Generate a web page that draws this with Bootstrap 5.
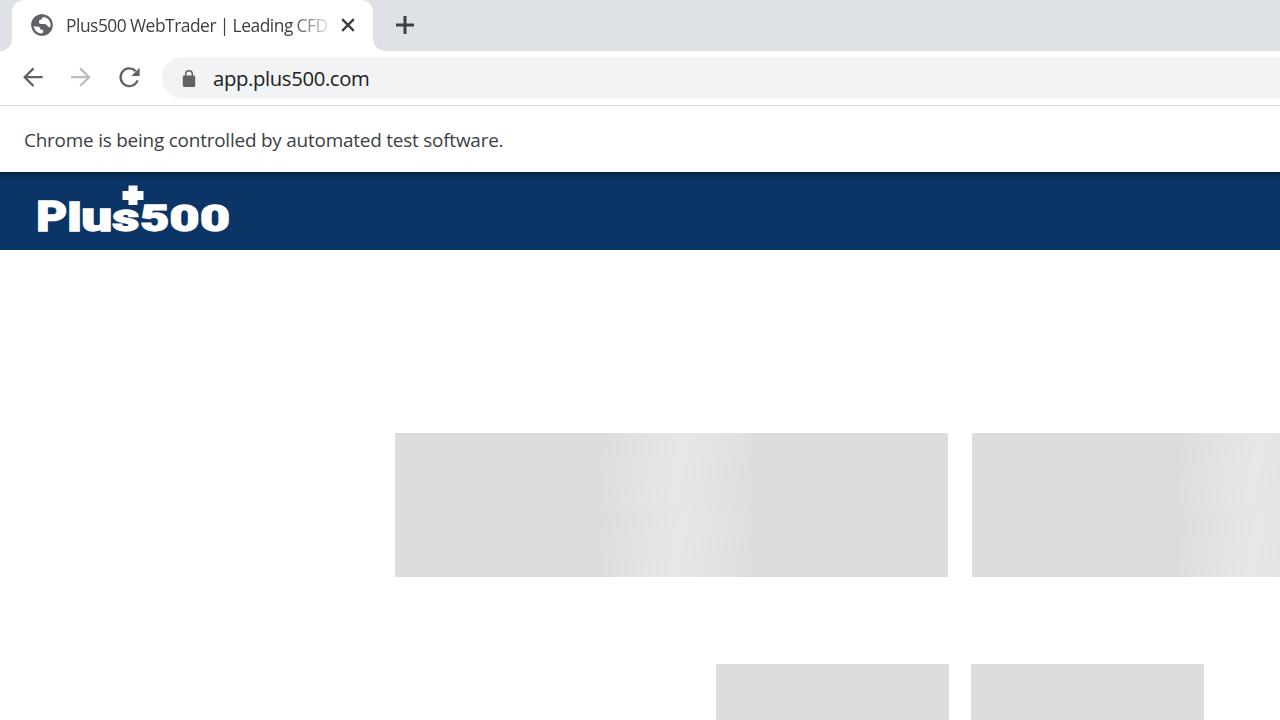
<!DOCTYPE html>
<html lang="en">
<head>
<meta charset="utf-8">
<meta name="viewport" content="width=device-width, initial-scale=1">
<title>Plus500 WebTrader</title>
<link href="https://cdn.jsdelivr.net/npm/bootstrap@5.3.0/dist/css/bootstrap.min.css" rel="stylesheet">
<style>
body{font-family:"Open Sans","Noto Sans",sans-serif;height:720px;overflow:hidden}
svg{display:block;flex:none}
.tab-strip{height:51px;background:#fff}
.strip-left{width:12px;background:#dee1e6;border-bottom-right-radius:12px}
.tab-wrap{width:361px;background:#dee1e6}
.browser-tab{height:51px;background:#fff;border-radius:12px 12px 0 0;padding:0 0 2px 18px}
.strip-rest{background:#dee1e6;border-bottom-left-radius:12px;padding:0 0 2px 22px}
.tab-title{width:263px;margin-left:12px;font-size:17.4px;line-height:24px;letter-spacing:-.48px;word-spacing:-.3px;color:#3c4043;-webkit-mask-image:linear-gradient(90deg,#000 224px,transparent 270px)}
.tab-close{margin-left:12px}
.toolbar{height:55px;border-bottom:1px solid #dadce0;padding:0 0 1px 18px}
.reload{margin-left:21px}
.address{height:42px;margin-left:17px;border-radius:21px 0 0 21px;background:#f1f3f4;padding-left:18px}
.url{font-size:20.3px;line-height:28px;margin-left:15px;padding-top:1px;letter-spacing:-.36px;color:#202124}
.infobar{height:66px;padding:2px 0 0 24px;font-size:18.9px;letter-spacing:-.2px;color:#3c4043}
.app-header{height:78px;padding-left:30px;background:linear-gradient(#062748,#0b3567 9px,#0b3567)}
.app-body{padding:183px 0 0 395px}
.bone{flex:none;background-color:#ddd}
.bone-wide{width:553px;height:144px;background-image:linear-gradient(100deg,rgba(255,255,255,0),rgba(255,255,255,.3) 50%,rgba(255,255,255,0));background-size:150px 75px;background-repeat:repeat-y;background-position:208px 0}
.bone-row{gap:24px}
.bone-row-small{gap:22px;margin-top:87px;padding-left:321px}
.bone-small{width:233px;height:56px}
</style>
</head>
<body class="bg-white d-flex flex-column">
<div class="tab-strip d-flex flex-shrink-0">
  <div class="strip-left"></div>
  <div class="tab-wrap flex-shrink-0">
    <div class="browser-tab d-flex align-items-center">
      <svg width="24" height="24" viewBox="0 0 24 24"><circle cx="12" cy="12" r="9.7" fill="#fff" stroke="#5f6368" stroke-width="2.2"/><path fill="#5f6368" d="M12 1.5C6 1.5 1.5 6 1.5 12l.4 1.6h5.3c1.9 0 3.3 1.2 3.3 3.1h2.6v2.5l-2.2 2.9c5.5.6 10.6-3.5 11.4-8.3-1.8 1-3.8.6-4.8-.9-.8-1.2-2.1-1.8-4.1-1.8h-2.3c-1.4 0-2.2-.8-2.2-2 0-1.7 1-2.5 2.6-2.5.2-1.5 1-2.4 2.8-2.5V2z"/></svg>
      <span class="tab-title text-nowrap overflow-hidden">Plus500 WebTrader | Leading CFD</span>
      <svg class="tab-close" width="14" height="14" viewBox="0 0 14 14"><path d="M1.2 1.2l11.6 11.6m0-11.6L1.2 12.8" stroke="#3c4043" stroke-width="2.4"/></svg>
    </div>
  </div>
  <div class="strip-rest flex-grow-1 d-flex align-items-center">
    <svg width="20" height="20" viewBox="0 0 20 20"><path d="M10 1v18M1 10h18" stroke="#3c4043" stroke-width="3"/></svg>
  </div>
</div>
<div class="toolbar d-flex align-items-center flex-shrink-0">
  <svg width="30" height="30" viewBox="0 0 30 30"><path d="M24.7 14.2H7M15.5 5.4L6.7 14.2l8.8 8.8" fill="none" stroke="#5f6368" stroke-width="2.3"/></svg>
  <svg class="ms-3" width="30" height="30" viewBox="0 0 30 30"><path d="M7 14.2h18M16.2 5.4L25 14.2 16.2 23" fill="none" stroke="#babcbe" stroke-width="2.3"/></svg>
  <svg class="reload" width="30" height="30" viewBox="0 0 30 30"><path d="M22.6 17.3a8.8 8.8 0 1 1-1.9-9.2" fill="none" stroke="#5f6368" stroke-width="2.3"/><path d="M24.6 4.7v8.2h-8.2z" fill="#5f6368"/></svg>
  <div class="address d-flex align-items-center flex-grow-1">
    <svg width="18" height="20" viewBox="0 0 18 20"><rect x="2.8" y="7.4" width="12.4" height="11.5" rx="1.3" fill="#5f6368"/><path d="M5.7 8V6a3.3 3.3 0 0 1 6.6 0v2" fill="none" stroke="#5f6368" stroke-width="1.5"/></svg>
    <span class="url">app.plus500.com</span>
  </div>
</div>
<div class="infobar d-flex align-items-center flex-shrink-0"><span class="text-nowrap">Chrome is being controlled by automated test software.</span></div>
<header class="app-header d-flex align-items-center flex-shrink-0">
  <svg width="210" height="78" viewBox="30 172 210 78" role="img" aria-label="Plus500">
    <g fill="#fff" stroke="#fff" stroke-width="1.3" font-family="Roboto, Liberation Sans" font-weight="900">
      <text x="36.2" y="231.4" font-size="42" textLength="31" lengthAdjust="spacingAndGlyphs">P</text>
      <text x="67.3" y="231.4" font-size="38.5" textLength="14.5" lengthAdjust="spacingAndGlyphs">l</text>
      <text x="81.3" y="231" font-size="41" textLength="31" lengthAdjust="spacingAndGlyphs">u</text>
      <text x="112.2" y="231" font-size="39" textLength="27" lengthAdjust="spacingAndGlyphs">s</text>
      <text x="140.2" y="231" font-size="37" textLength="29" lengthAdjust="spacingAndGlyphs">5</text>
      <text x="169.6" y="231" font-size="37" textLength="30" lengthAdjust="spacingAndGlyphs">0</text>
      <text x="200" y="231" font-size="37" textLength="30" lengthAdjust="spacingAndGlyphs">0</text>
    </g>
    <path d="M128.5 185.5h9v5.5h6v9h-6v5h-9v-5h-6v-9h6z" fill="#fff"/>
  </svg>
</header>
<main class="app-body flex-grow-1 overflow-hidden">
  <div class="bone-row d-flex overflow-hidden"><div class="bone bone-wide"></div><div class="bone bone-wide"></div></div>
  <div class="bone-row-small d-flex"><div class="bone bone-small"></div><div class="bone bone-small"></div></div>
</main>
<script src="https://cdn.jsdelivr.net/npm/bootstrap@5.3.0/dist/js/bootstrap.bundle.min.js"></script>
</body>
</html>
